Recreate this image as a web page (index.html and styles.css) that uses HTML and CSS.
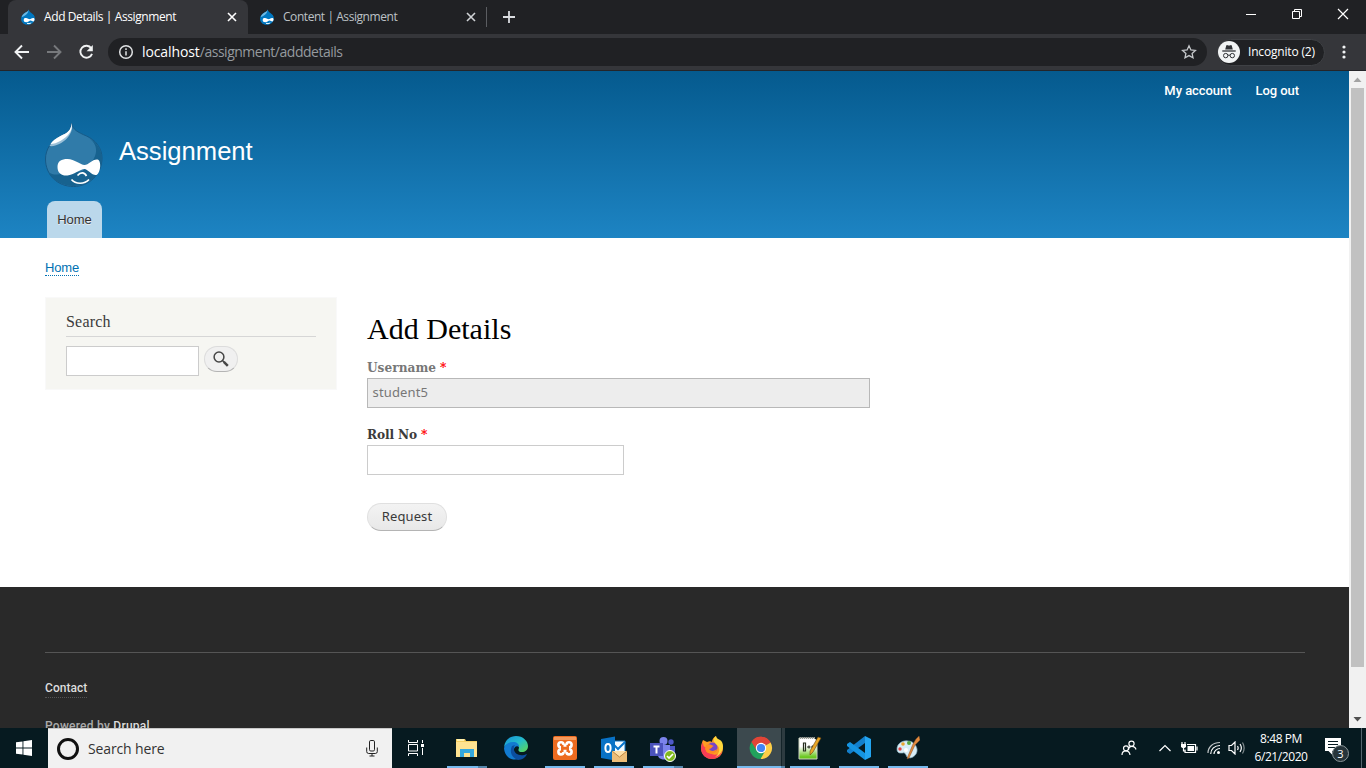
FILE: index.html
```html
<!DOCTYPE html>
<html lang="en">
<head>
<meta charset="utf-8">
<title>Add Details | Assignment</title>
<link rel="stylesheet" href="styles.css">
</head>
<body>
<svg width="0" height="0" class="defs">
  <symbol id="drop" viewBox="0 0 16 16">
    <path d="M8.700.2C8.400 2.400 5.500 3 3.600 4.800 1.700 6.500.8 8.300 1.100 10.400 1.500 13.600 4.400 15.800 8 15.800s6.900-2.800 6.900-6.300c0-3-2-4.600-3.500-5.600C9.800 2.800 9 2 8.700.2z" fill="#0077c0"/>
    <path d="M8.500 1C7.900 2.800 5.400 3.300 3.900 4.800 2.900 5.700 2 6.700 1.800 8 4 7.500 8.600 4.800 8.500 1z" fill="#6fb9e2"/>
    <path d="M3.700 11.200c0-1.700 1-2.300 2.300-2.100 1.800.3 3.300 1.500 4.500 1 1.200-.6 2.600-1.400 3.600-.8.8.6.5 2.700-.6 3.100-1.100.4-1.800-.9-2.900-.8-1.300.2-2.500 1.600-4.400 1.600-1.600 0-2.500-.7-2.500-2z" fill="#fff"/>
    <path d="M7 14.200c1.300.7 3 .6 4.200-.4" fill="none" stroke="#fff"/>
  </symbol>
</svg>
<div class="tabs">
  <div class="tab active"><svg class="fav"><use href="#drop"/></svg><span class="t1">Add Details | Assignment</span><svg class="close" viewBox="0 0 10 10"><path d="M1 1l8 8M9 1l-8 8"/></svg></div>
  <div class="tab"><svg class="fav"><use href="#drop"/></svg><span class="t2">Content | Assignment</span><svg class="close" viewBox="0 0 10 10"><path d="M1 1l8 8M9 1l-8 8"/></svg></div>
  <i class="tabsep"></i>
  <svg class="plus" viewBox="0 0 12 12"><path d="M6 0v12M0 6h12"/></svg>
  <div class="wins">
    <svg viewBox="0 0 12 12"><path d="M1 6.500h10"/></svg>
    <svg viewBox="0 0 12 12"><path d="M1.500 3.500h7v7h-7zM3.500 3.500v-2h7v7h-2"/></svg>
    <svg class="wx" viewBox="0 0 12 12"><path d="M1 1l10 10M11 1L1 11"/></svg>
  </div>
</div>
<div class="toolbar">
  <svg class="nav" viewBox="0 0 16 16"><path d="M15 8H2M8 1.500L1.500 8 8 14.500"/></svg>
  <svg class="nav dim" viewBox="0 0 16 16"><path d="M1 8h13M8 1.500L14.500 8 8 14.500"/></svg>
  <svg class="nav" viewBox="0 0 16 16"><path d="M13.300 4.300A6 6 0 1 0 14 9.800"/><path class="fill" d="M14.800 1v6.200H8.600z"/></svg>
  <div class="omni">
    <svg class="info" viewBox="0 0 16 16"><circle cx="8" cy="8" r="6.300"/><path d="M8 7.200v4.300M8 4.300v1.700"/></svg>
    <span class="url"><b>localhost</b>/assignment/adddetails</span>
    <svg class="star" viewBox="0 0 16 16"><path d="M8 1.800l1.900 4.100 4.500.5-3.300 3 .9 4.400L8 11.600l-4 2.200.9-4.400-3.300-3 4.500-.5z"/></svg>
  </div>
  <div class="incog">
    <svg viewBox="0 0 22 22"><circle cx="11" cy="11" r="11" fill="#f1f3f4"/><path d="M7.200 8.600l1-3.900c.2-.6.700-.7 1.300-.5.900.3 2.100.3 3 0 .6-.2 1.100-.1 1.300.5l1 3.900z" fill="#303236"/><path d="M4.300 10h13.400" stroke="#303236" stroke-width="1.300"/><g fill="none" stroke="#303236"><circle cx="7.700" cy="14.600" r="2.200"/><circle cx="14.300" cy="14.600" r="2.200"/><path d="M9.900 14.400q1.100-.8 2.200 0"/></g></svg>
    <span>Incognito (2)</span>
  </div>
  <svg class="dots" viewBox="0 0 4 16"><circle cx="2" cy="3" r="1.600"/><circle cx="2" cy="8" r="1.600"/><circle cx="2" cy="13" r="1.600"/></svg>
</div>
<div class="view">
  <main class="page">
    <header class="head">
      <nav class="user"><span>My account</span><span>Log out</span></nav>
      <div class="brand">
        <svg class="logo" viewBox="0 0 58 66">
          <path d="M27 1C27 8 23 11 16 14 7 19 1 27 1 37 1 53 13 64.500 29 64.500S57.500 52 57.500 36C57.500 26 51 18 42 14 33 10 28.500 8 27 1z" fill="#307ba9" stroke="#165a88"/>
          <path d="M44 15.500C53 22 54 31 47 40L38 49 13 52.500C8 53 4 51 3 48 8 62 27 68 42 61 53 56 59 44 57 32 55 24 50 19 44 15.500z" fill="#17628f"/>
          <path d="M27 1C27 8 23 11 16 14 11 16.500 7 20 5 24 11 25 21 20 25 13 27 10 28 7 27 1z" fill="#9bc0d8"/>
          <path d="M27 1C27 8 23 11 16 14 11 16.500 8 19 6 22 12 22 21 17 25 11 27 8 28 5 27 1z" fill="#fff"/>
          <path d="M13 45C13 39 17 37 23 37 30 37 36 43 40 43 44 43 48 37 53 37.500 57 38 56.500 51 52 53 48 54 43 47 40 47 36 47 29 53 23 53.500 17 54 13 51 13 45z" fill="#fff"/>
          <path d="M33 53.500c3-3.500 7-3.500 9 .5M27 57.500c4 5 13 5 17.500 0" fill="none" stroke="#fff" stroke-width="1.700"/>
        </svg>
        <span class="site">Assignment</span>
      </div>
      <div class="hometab">Home</div>
    </header>
    <div class="crumb"><a>Home</a></div>
    <div class="cols">
      <aside class="side">
        <h2>Search</h2>
        <div class="srow"><input type="text" class="sinput"><button class="sbtn"><svg viewBox="0 0 16 16"><circle cx="6" cy="6" r="4.900"/><path class="thin" d="M9.200 9.200l2 2"/><path d="M10.800 10.800l4 4"/></svg></button></div>
      </aside>
      <section class="form">
        <h1>Add Details</h1>
        <label class="muted"><span class="l1">Username</span> <em>*</em></label>
        <div class="field disabled">student5</div>
        <label class="second"><span class="l2">Roll No</span> <em>*</em></label>
        <input type="text" class="field short">
        <button class="req">Request</button>
      </section>
    </div>
    <footer class="foot">
      <a class="contact">Contact</a>
      <div class="power">Powered by <b>Drupal</b></div>
    </footer>
  </main>
  <div class="scroll"><svg viewBox="0 0 17 17"><path d="M4.500 11L8.500 6.500l4 4.500z" fill="#a3a3a3"/></svg><i></i><svg viewBox="0 0 17 17"><path d="M4.500 6l4 4.500 4-4.500z" fill="#505050"/></svg></div>
</div>
<div class="task">
  <div class="start"><svg viewBox="0 0 16 16"><path d="M0 2.300l6.500-.9v6.100H0zM7.400 1.300L16 0v7.500H7.400zM0 8.500h6.500v6.100L0 13.700zM7.400 8.500H16V16l-8.600-1.200z" fill="#fff"/></svg></div>
  <div class="find"><i class="ring"></i><span>Search here</span><svg viewBox="0 0 12 17"><rect x="3.500" y=".5" width="5" height="10.500" rx="1.300"/><path d="M.7 7.500v4q0 2 2 2h6.600q2 0 2-2v-4M6 13.500v2.500M3.500 16h5"/></svg></div>
  <div class="view-btn"><svg viewBox="0 0 18 18"><path d="M1.500 1v2.500h9V1M1.500 17v-2.500h9V17M1.500 5.500h9v6.500h-9zM15.500 1v3M15.500 9v7"/><path class="solid" d="M14 5h3v3h-3z"/></svg></div>
  <div class="apps">
    <div class="app run multi"><svg viewBox="0 0 24 24"><path d="M1 3h9l1 2h11v16H1z" fill="#f6cf63"/><path d="M2 3h7v2H2z" fill="#fff2b0"/><path d="M1 6h21v15H1z" fill="#ffe391"/><path d="M5 21v-8h14v8h-4v-4H9v4z" fill="#35a8dd"/></svg></div>
    <div class="app"><svg viewBox="0 0 24 24"><defs><linearGradient id="eg" x2="1" y2="1"><stop stop-color="#1790d8"/><stop offset=".5" stop-color="#24bccb"/><stop offset="1" stop-color="#62d94d"/></linearGradient></defs><path d="M0 11C1 3 7 0 12 0c7 0 12 5 12 10 0 4-3 6-6 6-4 0-4-2-3-4 0-3-3-5-6-5-4 0-7 2-9 4z" fill="url(#eg)"/><path d="M0 12c1-4 5-6 9-6 4 0 6 2 6 5-3-2-6 1-5 5 1 3 5 5 9 4-5 6-18 5-19-8z" fill="#127bd0"/><path d="M8 10c-3 6 0 12 6 14 4 0 8-3 9-6-7 3-12 0-13-4-.5-2 0-4 1-5z" fill="#0b4e9f"/></svg></div>
    <div class="app run"><svg viewBox="0 0 24 24"><rect width="24" height="24" rx="2" fill="#ed6b1f"/><path d="M1 1h22v3H1z" fill="#f49a5d"/><g stroke="#fff" stroke-width="2.600"><circle cx="8" cy="8.800" r="2.600"/><circle cx="16" cy="8.800" r="2.600"/><circle cx="8" cy="15.800" r="2.600"/><circle cx="16" cy="15.800" r="2.600"/></g><path d="M8 9h8v7H8z" fill="#ed6b1f"/><path d="M10.500 9.500h3M10.500 15h3" stroke="#fff" stroke-width="2.400"/></svg></div>
    <div class="app run"><svg viewBox="0 0 26 26"><path d="M11 5h13v12H11z" fill="#f5fbff" stroke="#0872c7"/><path d="M12 8l5 5 7-7" fill="none" stroke="#0875cd" stroke-width="2"/><path d="M0 3l14-2.500v24L0 22z" fill="#0872c6"/><ellipse cx="7" cy="12" rx="2.600" ry="4" fill="none" stroke="#fff" stroke-width="2"/><path d="M11 15h15v11H11z" fill="#edbd78"/><path d="M11 15l7.500 6 7.500-6" fill="#ffe0a9" stroke="#bd8743"/></svg></div>
    <div class="app run multi"><svg viewBox="0 0 26 26"><circle cx="13.500" cy="5" r="4" fill="#7b83eb"/><circle cx="21" cy="6" r="2.700" fill="#5059c9"/><path d="M17 10h8v7c0 4-8 5-8 0z" fill="#5059c9"/><path d="M8 9h12v10c0 6-12 6-12 0z" fill="#7b83eb"/><path d="M0 7h13v13H0z" fill="#4b53bc"/><path d="M3.500 10.500h6M6.500 10.500v7" stroke="#fff" stroke-width="2"/><circle cx="20" cy="20" r="5.500" fill="#80b91d" stroke="#fff"/><path d="M17 20l2 2 4-4" fill="none" stroke="#fff" stroke-width="1.600"/></svg></div>
    <div class="app"><svg viewBox="0 0 24 24"><path d="M3 4l4 2c2-1 4-1 5 0 0-3 2-5 4-6 0 4 7 5 7 12 0 7-5 11-11 11S1 18 1 12c0-3 1-6 2-8z" fill="#ff9b23"/><path d="M1 12c0 7 5 11 11 11s10-4 10-9c-3 5-8 6-12 3-4 0-5-3-3-5-4-1-4-4-4-6-1 2-2 4-2 6z" fill="#f83d54"/><circle cx="12.500" cy="11.500" r="5" fill="#7646c7"/><path d="M6 9c4-2 5 0 8 1-2 0-2 3-5 3 2 3 6 2 8 0-1 6-9 7-12 0z" fill="#ff8b22"/><path d="M16 0c-5 4-1 7 2 10 3 4 0 9-3 11 9-3 10-14 5-17-2-1-4-2-4-4z" fill="#ffd83c"/></svg></div>
    <div class="app run on multi"><svg viewBox="0 0 24 24"><path d="M12 12L2.500 6A11 11 0 0 1 21.600 6.600z" fill="#e04537"/><path d="M12 12l9.600-5.400A11 11 0 0 1 11.500 23z" fill="#fdce47"/><path d="M12 12L2.500 6a11 11 0 0 0 9 17l4-7z" fill="#21a25c"/><path d="M12 7h9.700A11 11 0 0 0 2.500 6L8 15z" fill="#e04537"/><circle cx="12" cy="12" r="5.200" fill="#fff"/><circle cx="12" cy="12" r="4.100" fill="#4285f4"/></svg></div>
    <div class="app run"><svg viewBox="0 0 24 24"><defs><linearGradient id="ng" x2="0" y2="1"><stop offset=".4" stop-color="#fff"/><stop offset=".9" stop-color="#6ac720"/></linearGradient></defs><path d="M1 2h15l3 3v18H1z" fill="url(#ng)" stroke="#ccd3bf"/><path d="M2 2h15" stroke="#999" stroke-width="2" stroke-dasharray="1 1"/><path d="M5.500 7v8h2V7zM9 11h3.500M13 11h3M11 9.500v3M14.500 9.500v3" fill="none" stroke="#272e20" stroke-width="1.200"/><path d="M20 1l3 1-8 14-3 3v-4z" fill="#e8a626" stroke="#684510" stroke-width=".6"/></svg></div>
    <div class="app run"><svg viewBox="0 0 24 24"><path d="M18 0l6 3v18l-6 3z" fill="#23a5f1"/><path d="M18 0v7L3 18l-3-2v-2z" fill="#137fcb"/><path d="M18 24v-7L3 6 0 8v2z" fill="#1594e1"/></svg></div>
    <div class="app run"><svg viewBox="0 0 24 24"><path d="M12 5C6 4 1 8 1 13s4 4 6 4c2-1 3 2 4 4 4 3 11-2 10-8-1-5-5-8-9-8z" fill="#d8edf6" stroke="#81aabc" stroke-width=".7"/><circle cx="4" cy="13" r="1.700" fill="#df4545"/><circle cx="7" cy="8" r="1.800" fill="#e9a632"/><circle cx="13" cy="7" r="2" fill="#55a742"/><circle cx="10" cy="14" r="2" fill="#fff"/><path d="M20 3l3-3 1 4-5 5-6 13-2 1 1-3 5-12z" fill="#e18a3e" stroke="#865125" stroke-width=".5"/></svg></div>
  </div>
  <div class="tray">
    <svg class="people" viewBox="0 0 16 16"><circle cx="10.500" cy="3.700" r="2.600"/><path d="M7.500 10c0-5 6.500-4.500 7.500-.5"/><circle cx="5" cy="8.300" r="2.500"/><path d="M1 15c0-5.500 7.500-5.500 8 0"/></svg>
    <svg class="chev" viewBox="0 0 14 8"><path d="M1.500 7L7 1.500 12.500 7"/></svg>
    <svg class="bat" viewBox="0 0 18 14"><path d="M7 3.500h8.500v8H5v-3M17 5.500v4"/><path class="solid" d="M7.500 5h6.500v5H7.500zM1 3h5v3L4.500 7h-2L1 6z"/><path d="M2 1v2M5 1v2M3.500 7v3h2"/></svg>
    <svg class="wifi" viewBox="0 0 14 14"><path d="M1 12C1 6 6 1.500 13 1.500" opacity=".75"/><path d="M3.700 13c0-5 4-8.500 9.300-8.500M7 13c0-3 3-5.500 6-5.500"/><circle cx="11.500" cy="11.500" r="1.500" class="solid"/></svg>
    <svg class="vol" viewBox="0 0 17 14"><path d="M1 4.500h2.500L7 1v12L3.500 9.500H1zM9.500 5q1.300 2 0 4M12 3q2.700 4 0 8"/><path d="M14.500 1.500q3.300 5.500 0 11" opacity=".5"/></svg>
    <div class="clock"><span class="time">8:48 PM</span><span class="date">6/21/2020</span></div>
    <div class="note"><svg viewBox="0 0 17 17"><path d="M0 0h16v13H7v3.500L3.500 13H0z" fill="#fff"/><path d="M3 3.500h10M3 6.500h10M3 9.500h7" stroke="#061a20" stroke-width="1"/></svg><span>3</span></div>
    <i class="edge"></i>
  </div>
</div>
</body>
</html>
```
FILE: styles.css
```css
* { box-sizing: border-box; }
body { margin: 0; width: 1366px; height: 768px; overflow: hidden; display: flex; flex-direction: column; font-family: "Liberation Sans", sans-serif; }
svg { display: block; flex: none; fill: none; }
.defs { position: absolute; }
.tabs { height: 34px; flex: none; background: #202124; display: flex; align-items: center; padding-left: 8px; color: #bdc1c6; font: 12px/16px "Open Sans", sans-serif; white-space: nowrap; }
.tab { display: flex; align-items: center; width: 239px; height: 34px; padding: 0 11px 0 11px; }
.tab.active { background: #35363a; color: #fff; border-radius: 8px 8px 0 0; width: 240px; padding: 0 10px 0 12px; }
.fav { width: 16px; height: 16px; margin-right: 8px; }
.t1 { letter-spacing: -.4px; }
.t2 { letter-spacing: -.44px; }
.close { width: 10px; height: 10px; margin-left: auto; stroke: #d0d3d6; stroke-width: 1.6; }
.active .close { stroke: #fff; margin-right: 1px; }
.tabsep { width: 1px; height: 20px; background: #5b5d61; margin-left: -1px; }
.plus { width: 12px; height: 12px; margin-left: 16px; stroke: #dadce0; stroke-width: 1.8; }
.wins { display: flex; gap: 34px; margin: -6px 17px 0 auto; }
.wins svg { width: 12px; height: 12px; stroke: #fff; stroke-width: 1; }
.wins .wx { stroke-width: 1.2; }
.toolbar { height: 37px; flex: none; background: #35363a; border-bottom: 1px solid #242529; display: flex; align-items: center; padding-left: 14px; }
.nav { width: 16px; height: 16px; margin-right: 16px; stroke: #f1f3f4; stroke-width: 1.9; }
.dim { stroke: #77797c; }
.fill { fill: #f1f3f4; stroke: none; }
.omni { width: 1099px; height: 28px; margin-left: -2px; border-radius: 14px; background: #202124; display: flex; align-items: center; padding: 0 10px 0 10px; color: #959a9f; }
.info { width: 16px; height: 16px; stroke: #e0e2e4; stroke-width: 1.5; }
.url { margin-left: 8px; font: 14px/20px "Open Sans", sans-serif; letter-spacing: -.36px; }
.url b { color: #fff; font-weight: 400; letter-spacing: -.1px; }
.url { letter-spacing: -.48px; }
.star { width: 16px; height: 16px; margin-left: auto; stroke: #c5c8cb; stroke-width: 1.3; }
.incog { width: 108px; height: 27px; margin-left: 10px; border-radius: 14px; background: #202124; border: 1px solid #3f4145; display: flex; align-items: center; gap: 8px; color: #fff; font: 12px/18px "Open Sans", sans-serif; letter-spacing: -.18px; white-space: nowrap; }
.incog svg { width: 22px; height: 22px; }
.dots { width: 4px; height: 16px; margin-left: 17px; fill: #f1f3f4; }
.view { height: 657px; flex: none; display: flex; overflow: hidden; }
.page { width: 1349px; overflow: hidden; background: #fff; }
.head { height: 167px; background: linear-gradient(#055a8e, #1d84c3); display: flex; flex-direction: column; align-items: flex-start; padding-left: 44px; }
.user { align-self: flex-end; display: flex; gap: 24px; padding: 11px 50px 0 0; height: 51px; color: #fff; font: 500 13px/17px Roboto, sans-serif; letter-spacing: -.06px; }
.brand { display: flex; height: 79px; }
.logo { width: 59px; height: 66px; }
.site { margin: 12px 0 0 16px; color: #fff; font-size: 25.6px; line-height: 34px; letter-spacing: 0; }
.hometab { width: 55px; height: 37px; margin-left: 3px; border-radius: 8px 8px 0 0; background: #bbd8eb; color: #333; font-size: 13px; line-height: 37px; text-align: center; text-shadow: 0 1px #eee; }
.crumb { height: 59px; padding: 20px 0 0 45px; font-size: 13px; }
.crumb a { display: inline-block; height: 18px; line-height: 19px; color: #0071b3; border-bottom: 1px dotted #0071b3; letter-spacing: -.15px; }
.cols { display: flex; height: 290px; padding-left: 45px; gap: 30px; align-items: flex-start; }
.side { width: 292px; height: 93px; background: #f6f6f2; border: 1px solid #f9f9f9; padding: 13px 20px 0; }
.side h2 { margin: 0; height: 26px; font: 16px/21px "Liberation Serif", serif; color: #3b3b3b; letter-spacing: .2px; border-bottom: 1px solid #d6d6d6; }
.srow { display: flex; margin-top: 9px; gap: 5px; }
input { outline: 0; padding: 0 5px; }
.sinput { width: 133px; height: 30px; border: 1px solid #ccc; background: #fff; }
.sbtn { width: 34px; height: 26px; padding: 0 0 0 8px; background: #f0f0f0; border: 1px solid #dcdcdc; border-bottom-color: #b4b4b4; border-radius: 14px; }
.sbtn svg { width: 16px; height: 16px; stroke: #464646; stroke-width: 2.5; }
.sbtn circle { stroke-width: 1.5; }
.sbtn .thin { stroke-width: 1.5; }
.form { display: flex; flex-direction: column; align-items: flex-start; padding-top: 14px; }
h1 { margin: 0; height: 46px; font: 30px/35px "Liberation Serif", serif; letter-spacing: .02px; color: #000; }
label { height: 21px; font: bold 13.5px/20px "DejaVu Serif Condensed", "DejaVu Serif", serif; color: #3b3b3b; display: flex; gap: 4px; }
label em { color: red; font-style: normal; }
.l1 { letter-spacing: .02px; }
.l2 { letter-spacing: -.12px; }
.muted { color: #777; }
.second { margin-top: 16px; }
.field { width: 503px; height: 30px; border: 1px solid #b8b8b8; background: #ededed; color: #777; padding: 0 4.500px; font: 13px/26px "Noto Sans", sans-serif; letter-spacing: .15px; }
.short { width: 257px; background: #fff; border-color: #ccc; }
.req { width: 80px; height: 28px; margin-top: 28px; padding: 0 0 2px; border: 1px solid #e0e0e0; border-bottom-color: #b4b4b4; border-radius: 14px; background: linear-gradient(#f3f3f3, #e8e8e8); color: #3a3a3a; font: 13px/20px "Noto Sans", sans-serif; letter-spacing: .1px; }
.foot { height: 180px; background: #292929; padding: 65px 44px 0 45px; display: flex; flex-direction: column; align-items: flex-start; color: #aaa; font: 500 12px/18px Roboto, sans-serif; }
.foot::before { content: ""; width: 1260px; height: 1px; background: #555; margin-bottom: 26px; }
.contact { height: 19px; color: #ddd; border-bottom: 1px dotted #555; letter-spacing: .05px; }
.power { margin-top: 19px; letter-spacing: .25px; }
.power b { color: #ddd; font-weight: 500; }
.scroll { width: 17px; background: #f1f1f1; }
.scroll svg { width: 17px; height: 17px; }
.scroll i { display: block; width: 13px; height: 579px; margin: 0 2px; background: #c1c1c1; }
.scroll svg:last-child { margin-top: 44px; }
.task { height: 40px; flex: none; display: flex; background: #061a20; }
.start { width: 48px; padding: 12px 16px; }
.start svg { width: 16px; height: 16px; }
.find { width: 344px; background: #f1f1f1; border-top: 1px solid #c8c8c8; display: flex; align-items: center; padding: 0 14px 0 9px; color: #333; font: 14px/20px "Open Sans", sans-serif; letter-spacing: -.14px; }
.ring { width: 22px; height: 22px; border: 3px solid #111; border-radius: 50%; margin-right: 9px; }
.find svg { width: 12px; height: 17px; margin-left: auto; stroke: #222; }
.view-btn { width: 51px; padding: 11px 15px; }
.view-btn svg { width: 18px; height: 18px; stroke: #fff; stroke-width: 1; }
.view-btn .solid { fill: #fff; stroke: none; }
.apps { display: flex; gap: 1px; }
.app { width: 48px; height: 40px; display: flex; flex-direction: column; align-items: center; padding-top: 8px; }
.app svg { width: 24px; height: 24px; }
.app:nth-child(4) svg, .app:nth-child(5) svg { width: 26px; height: 26px; margin-bottom: -2px; }
.app.run::after { content: ""; width: 40px; height: 2px; margin-top: 6px; background: #76b9ed; }
.run.multi::after { background: linear-gradient(90deg, #76b9ed 31px, #5587ac 31px); }
.app.on { background: linear-gradient(90deg, #3c494e 44px, #142429 44px, #142429 45px, #2d3b40 45px); }
.app.on::after { width: 48px; background: linear-gradient(90deg, #76b9ed 44px, #5587ac 44px); }
.tray { flex: 1; display: flex; align-items: center; padding-left: 189px; color: #fff; }
.tray > svg { stroke: #fff; stroke-width: 1.2; }
.people { width: 16px; height: 16px; }
.chev { width: 14px; height: 8px; margin-left: 21px; }
.bat { width: 18px; height: 14px; margin-left: 8px; }
.wifi { width: 14px; height: 14px; margin-left: 9px; }
.vol { width: 17px; height: 14px; margin-left: 7px; }
.solid { fill: #fff; stroke: none; }
.clock { width: 56px; margin-left: 8px; display: flex; flex-direction: column; align-items: center; font: 12px/18px "Open Sans", sans-serif; letter-spacing: -.42px; white-space: nowrap; height: 37px; }
.note { position: relative; width: 25px; height: 24px; margin: 4px 0 0 16px; }
.note svg { width: 17px; height: 17px; }
.note span { position: absolute; left: 7px; top: 7px; width: 17px; height: 17px; border: 1px solid #8b9699; border-radius: 50%; background: #26343a; font: 11px/15px "Open Sans", sans-serif; text-align: center; }
.edge { width: 1px; height: 40px; background: #53666e; margin-left: auto; margin-right: 4px; }
```
